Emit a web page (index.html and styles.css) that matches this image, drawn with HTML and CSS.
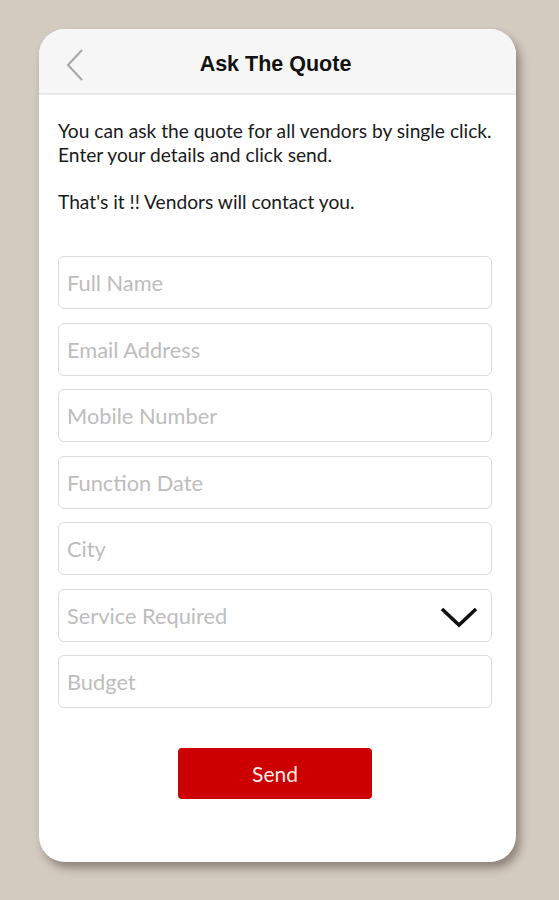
FILE: index.html
```html
<!DOCTYPE html>
<html lang="en">
<head>
    <meta charset="UTF-8">
    <meta name="viewport" content="width=device-width, initial-scale=1.0">
    <title>Ask The Quote</title>
    <link rel="stylesheet" href="styles.css">
</head>
<body>
    <div class="quote-card">
        <div class="quote-header">
            <button class="back-button" aria-label="Back">
                <svg width="20" height="34" viewBox="0 0 20 34">
                    <path d="M17 2 L3 17 L17 32" fill="none" stroke="#a6a6a6" stroke-width="2"/>
                </svg>
            </button>
            <h1>Ask The Quote</h1>
        </div>

        <div class="quote-body">
            <p class="intro">You can ask the quote for all vendors by single click.<br>Enter your details and click send.</p>
            <p class="intro">That's it !! Vendors will contact you.</p>

            <form class="quote-form">
                <input type="text" placeholder="Full Name">
                <input type="email" placeholder="Email Address">
                <input type="tel" placeholder="Mobile Number">
                <input type="text" placeholder="Function Date">
                <input type="text" placeholder="City">
                <div class="select-field">
                    <span>Service Required</span>
                    <svg width="40" height="24" viewBox="0 0 40 24">
                        <path d="M3 4 L20 20 L37 4" fill="none" stroke="#111" stroke-width="3.6"/>
                    </svg>
                </div>
                <input type="text" placeholder="Budget">
                <button type="button" class="send-button">Send</button>
            </form>
        </div>
    </div>
</body>
</html>
```

FILE: styles.css
```css
body {
    margin: 0;
    background-color: #d3cac0;
    font-family: Lato, "Liberation Sans", sans-serif;
    height: 900px;
    overflow: hidden;
}

.quote-card {
    width: 477px;
    height: 833px;
    margin: 29px 0 0 39px;
    background: #fff;
    border-radius: 26px;
    overflow: hidden;
    box-shadow: 4px 6px 8px rgba(60, 45, 35, 0.45);
}

.quote-header {
    box-sizing: border-box;
    height: 66px;
    padding-top: 6px;
    background: #f6f6f6;
    border-bottom: 2px solid #e8e8e8;
    display: flex;
    align-items: center;
    justify-content: center;
    position: relative;
}

.quote-header h1 {
    margin: 0 0 0 -4px;
    font-family: "Liberation Sans", Arial, sans-serif;
    font-size: 21.5px;
    font-weight: bold;
    color: #111;
}

.back-button {
    position: absolute;
    left: 26px;
    top: 19px;
    background: none;
    border: none;
    padding: 0;
}

.quote-body {
    padding: 24px 20px 0 19px;
}

.intro {
    margin: 0 0 23px;
    font-size: 19.2px;
    line-height: 24px;
    color: #1a1a1a;
    white-space: nowrap;
}

.quote-form {
    display: flex;
    flex-direction: column;
    gap: 13.5px;
    margin-top: 42px;
}

.quote-form input,
.select-field {
    box-sizing: border-box;
    width: 434px;
    height: 53px;
    border: 1.5px solid #dcdcdc;
    border-radius: 6px;
    padding: 0 8px;
    font-family: Lato, sans-serif;
    font-size: 21.8px;
    color: #333;
    background: #fff;
}

.quote-form input::placeholder {
    color: #bdbdbd;
}

.select-field {
    display: flex;
    align-items: center;
    justify-content: space-between;
    color: #bdbdbd;
    padding-right: 12px;
}

.select-field svg {
    margin-top: 4px;
}

.send-button {
    align-self: flex-start;
    margin: 26px 0 0 120px;
    width: 194px;
    height: 51px;
    background: #cc0000;
    color: #fbe9e9;
    border: none;
    border-radius: 4px;
    font-family: Lato, sans-serif;
    font-size: 21px;
    cursor: pointer;
}
```
